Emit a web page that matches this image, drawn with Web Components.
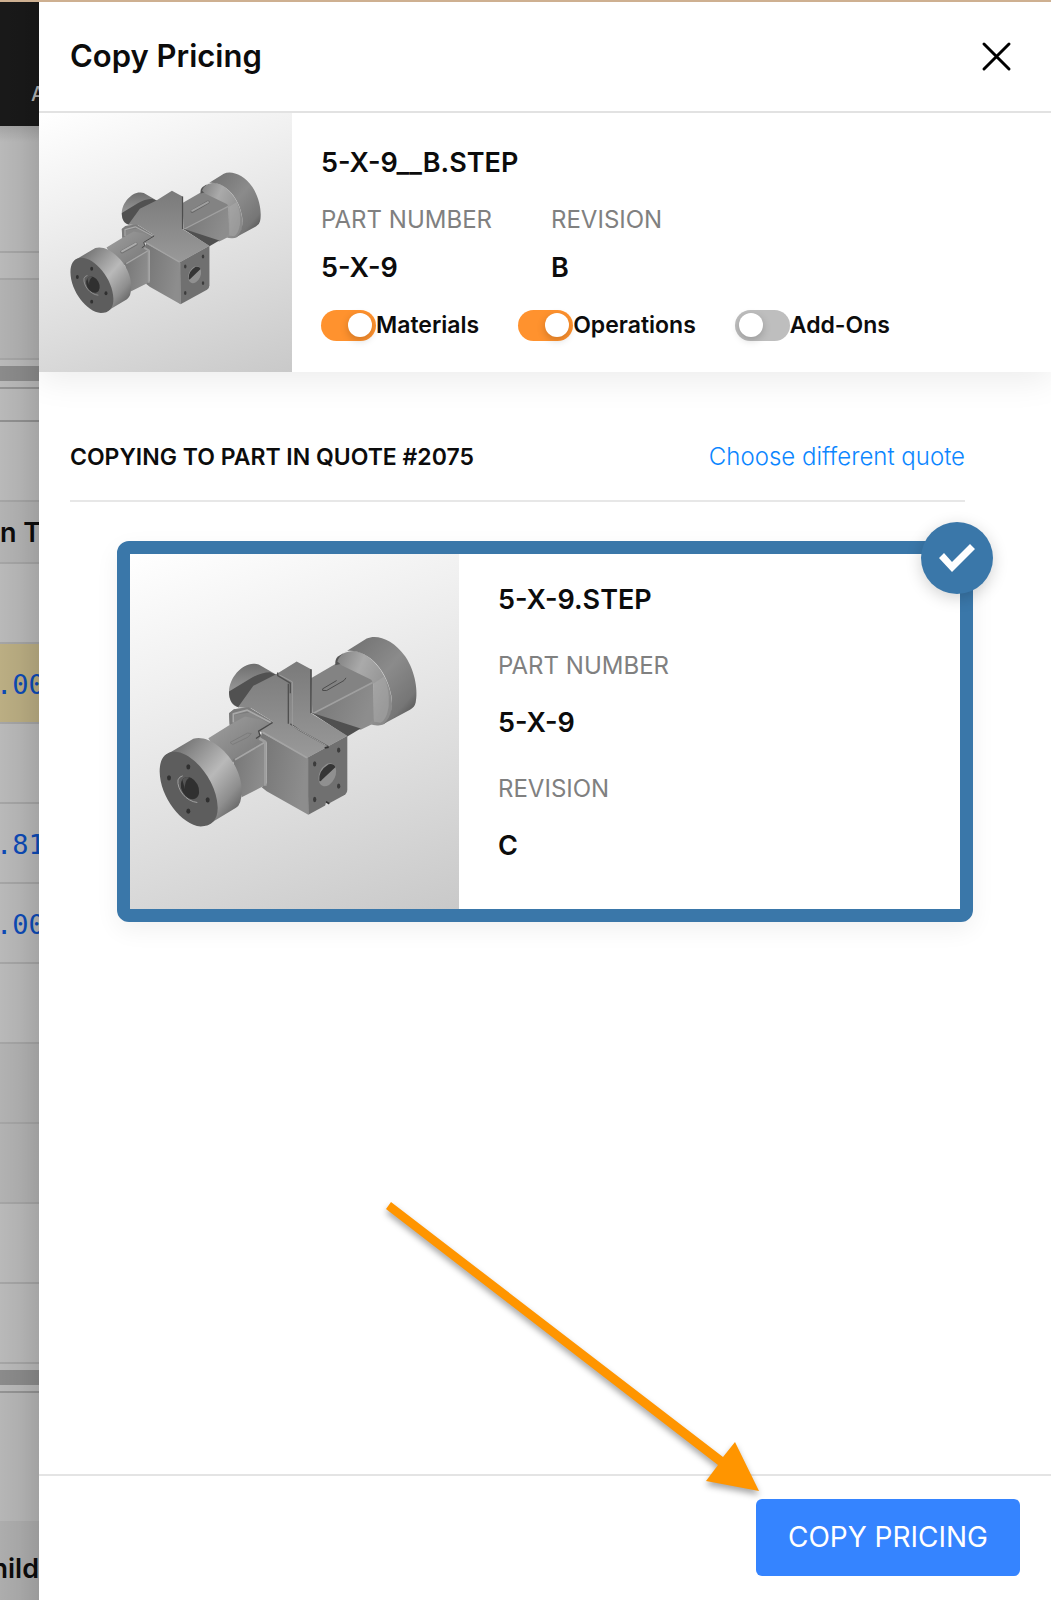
<!DOCTYPE html>
<html lang="en">
<head>
<meta charset="utf-8">
<meta name="viewport" content="width=device-width, initial-scale=1">
<title>Copy Pricing</title>
<style>
  body { margin: 0; font-family: Inter, "Liberation Sans", sans-serif; color: #0c0c0c; background: #fff; }
</style>
</head>
<body>
<app-shell>
  <quote-backdrop slot="behind"></quote-backdrop>
  <copy-drawer>
    <drawer-header slot="header">Copy Pricing</drawer-header>
    <source-part slot="source" name="5-X-9__B.STEP" number="5-X-9" revision="B">
      <toggle-switch checked>Materials</toggle-switch>
      <toggle-switch checked>Operations</toggle-switch>
      <toggle-switch>Add-Ons</toggle-switch>
    </source-part>
    <section-bar>
      COPYING TO PART IN QUOTE #2075
      <span slot="action">Choose different quote</span>
    </section-bar>
    <target-card name="5-X-9.STEP" number="5-X-9" revision="C"></target-card>
    <action-button slot="footer">COPY PRICING</action-button>
    <pointer-arrow slot="overlay"></pointer-arrow>
  </copy-drawer>
</app-shell>

<script>
const define = (name, html, setup) => {
  const template = document.createElement('template');
  template.innerHTML = html;
  customElements.define(name, class extends HTMLElement {
    constructor() {
      super();
      this.attachShadow({ mode: 'open' }).append(template.content.cloneNode(true));
    }
    connectedCallback() {
      if (setup) setup(this, this.shadowRoot);
    }
  });
};

const fillText = (host, root) => {
  root.querySelectorAll('[data-text]').forEach(el => {
    el.textContent = host.getAttribute(el.dataset.text);
  });
};

define('app-shell', `
  <style>
    :host { display: flex; min-height: 100vh; box-sizing: border-box; border-top: 2px solid #ceb091; }
    slot[name=behind] { display: block; flex: 0 0 39px; width: 39px; }
    main { display: flex; flex: 1; min-width: 0; }
  </style>
  <slot name="behind"></slot>
  <main><slot></slot></main>
`);

define('quote-backdrop', `
  <style>
    :host { display: flex; flex-direction: column; height: 100%; overflow: hidden; background: #b9b9b9; position: relative; }
    :host::after { content: ""; position: absolute; inset: 0; background: linear-gradient(90deg, transparent, rgba(0,0,0,.04) 50%, rgba(0,0,0,.11)); }
    div { box-sizing: border-box; display: flex; align-items: center; flex: none; white-space: nowrap; font-size: 27px; line-height: 32px; font-weight: 600; }
    .nav { height: 124px; background: #191919; color: #b5b5b5; font-size: 20px; font-weight: 500; align-items: flex-end; justify-content: flex-end; padding-bottom: 16px; }
    .nav span { width: 8px; }
    .row { height: 80px; border-bottom: 2px solid #a5a5a5; }
    .first { height: 127px; background: linear-gradient(#a4a4a4, #b9b9b9 16px); }
    .thin { height: 27px; }
    .mid { height: 33px; border-color: #909090; }
    .head { height: 62px; background: #b3b3b3; padding-top: 2px; }
    .gap { height: 6px; }
    .bar { height: 15px; background: #8b8b8b; }
    .rule { height: 8px; border-bottom: 2px solid #939393; }
    .shade { background: #b2b2b2; }
    .gold { background: #bbae83; }
    .num { color: #0c4ab6; font-family: "DejaVu Sans Mono", monospace; font-weight: 400; text-indent: -4px; padding-top: 3px; }
    .tail { height: 128px; background: #b6b6b6; }
    .foot { flex: 1; background: #adadad; justify-content: flex-end; padding-top: 16px; }
  </style>
  <div class="nav"><span>A</span></div>
  <div class="row first"></div>
  <div class="row thin"></div>
  <div class="row shade"></div>
  <div class="gap"></div>
  <div class="bar"></div>
  <div class="rule"></div>
  <div class="row mid"></div>
  <div class="row"></div>
  <div class="row head">n T</div>
  <div class="row"></div>
  <div class="row gold num">.00</div>
  <div class="row"></div>
  <div class="row num">.81</div>
  <div class="row num">.00</div>
  <div class="row"></div>
  <div class="row shade"></div>
  <div class="row shade"></div>
  <div class="row"></div>
  <div class="row"></div>
  <div class="gap"></div>
  <div class="bar"></div>
  <div class="rule"></div>
  <div class="tail"></div>
  <div class="foot">hild</div>
`);

define('copy-drawer', `
  <style>
    :host { display: flex; flex-direction: column; flex: 1; min-width: 0; background: #fff; position: relative; }
    .body { flex: 1; padding: 64px 86px 64px 31px; }
    footer { display: flex; justify-content: flex-end; padding: 23px 31px 24px; border-top: 2px solid #e4e4e4; }
  </style>
  <slot name="header"></slot>
  <slot name="source"></slot>
  <div class="body"><slot></slot></div>
  <footer><slot name="footer"></slot></footer>
  <slot name="overlay"></slot>
`);

define('drawer-header', `
  <style>
    :host { display: block; border-bottom: 2px solid #e2e2e2; }
    header { display: flex; align-items: center; justify-content: space-between; height: 109px; padding: 0 31px; box-sizing: border-box; padding-bottom: 1px; }
    h1 { margin: 0; font-size: 31px; line-height: 40px; font-weight: 600; color: #0c0c0c; }
    button { display: flex; border: 0; padding: 0; background: none; cursor: pointer; }
    svg { display: block; width: 48px; height: 48px; }
  </style>
  <header>
    <h1><slot></slot></h1>
    <button type="button" aria-label="Close">
      <svg viewBox="0 0 48 48" fill="none" stroke="#000" stroke-width="3" stroke-linecap="round"><path d="M12 12 37 37M37 12 12 37"/></svg>
    </button>
  </header>
`);

define('part-preview', `
  <style>
    :host { display: block; background: linear-gradient(160deg, #fff, #f0f0f0 30%, #ddd 65%, #c9c9c9); }
    svg { display: block; width: 100%; height: 100%; }
    :host(:not([split])) .split { display: none; }
    :host([split]) .solid { display: none; }
  </style>
  <svg viewBox="60 104 987 1062" aria-hidden="true">
    <defs>
      <linearGradient id="cyl" x1="0" y1="0" x2="1" y2="1"><stop offset="0" stop-color="#6c6c6c"/><stop offset=".5" stop-color="#8b8b8b"/><stop offset=".8" stop-color="#767676"/><stop offset="1" stop-color="#3e3e3e"/></linearGradient>
      <linearGradient id="ring" x1="0" y1="0" x2="1" y2="1"><stop offset="0" stop-color="#5c5c5c"/><stop offset=".25" stop-color="#8a8a8a"/><stop offset=".52" stop-color="#b9b9b9"/><stop offset=".75" stop-color="#8e8e8e"/><stop offset="1" stop-color="#444"/></linearGradient>
      <linearGradient id="fillet" x1="0" y1="0" x2="1" y2=".6"><stop offset="0" stop-color="#808080"/><stop offset=".4" stop-color="#aaa"/><stop offset="1" stop-color="#8a8a8a"/></linearGradient>
      <linearGradient id="top" x1="0" y1="0" x2="0" y2="1"><stop offset="0" stop-color="#7a7a7a"/><stop offset="1" stop-color="#999"/></linearGradient>
      <linearGradient id="front" x1="0" y1="0" x2="1" y2=".3"><stop offset="0" stop-color="#757575"/><stop offset="1" stop-color="#8d8d8d"/></linearGradient>
      <linearGradient id="arm" x1="0" y1="0" x2="1" y2="1"><stop offset="0" stop-color="#a0a0a0"/><stop offset="1" stop-color="#727272"/></linearGradient>
      <linearGradient id="stub" x1="0" y1="0" x2="0" y2="1"><stop offset="0" stop-color="#6e6e6e"/><stop offset="1" stop-color="#b0b0b0"/></linearGradient>
    </defs>
    <path fill="url(#stub)" d="M430 432C395 432 358 475 357 515C357 542 366 558 385 562L440 540L502 466L446 434Q438 431 430 432Z"/>
    <path fill="#515151" d="M357 515L420 477Q450 458 480 457L502 466L430 502L400 558L385 562C366 556 357 540 357 515Z"/>
    <path fill="#838383" d="M603 475L680 430L735 420L800 470L790 490L607 582Z"/>
    <path fill="url(#front)" d="M607 582L790 488L792 610L752 630Z"/>
    <path fill="none" stroke="#a0a0a0" stroke-width="5" d="M609 581L788 488"/>
    <path fill="#505050" d="M603 578L752 626L712 650Z"/>
    <path fill="#555" d="M676 436Q674 418 684 410L700 400V430Z"/>
    <path fill="url(#fillet)" d="M682 425C690 402 710 392 738 394C795 405 845 485 846 552C846 592 832 617 805 617Q790 618 778 611L790 600V492L784 480L696 437Z"/>
    <path fill="#b1b1b1" opacity=".4" d="M792 490L822 470Q840 510 836 560Q830 600 812 609L792 606Z"/>
    <path fill="url(#cyl)" d="M684 410L770 356C800 342 850 358 886 410C918 458 924 518 917 548Q914 562 900 570L812 617C840 604 850 568 844 528C832 455 778 388 712 393Z"/>
    <path fill="#888" d="M357 580L372 568L416 562L488 606L446 636L400 640L359 615Z"/>
    <path fill="url(#top)" d="M497 464L560 425L603 448V580L712 648L592 714L448 634L488 605L425 566L384 562L430 498Z"/>
    <path fill="none" stroke="#4d4d4d" stroke-width="5" d="M603 448V580"/>
    <path fill="url(#arm)" d="M295 655L360 615L405 590L484 606L446 636L468 665L375 722L350 740Z"/>
    <path fill="url(#front)" d="M368 718L468 665V795L395 832Z"/>
    <path fill="none" stroke="#a6a6a6" stroke-width="5" d="M375 720L463 668"/>
    <path fill="#7c7c7c" d="M357 580L372 568L416 562L488 606L480 613L420 578L375 585L372 608L359 615Z"/>
    <path fill="none" stroke="#a9a9a9" stroke-width="5" stroke-linejoin="round" d="M370 608V582L412 571L482 608"/>
    <path fill="none" stroke="#484848" stroke-width="4" d="M488 608L446 634L450 648L438 656"/>
    <path fill="url(#front)" d="M455 638L592 714L595 885L470 814L455 802L470 790V668L452 656Z"/>
    <path fill="none" stroke="#9e9e9e" stroke-width="8" stroke-linejoin="round" d="M448 656L466 666V798"/>
    <path fill="none" stroke="#a4a4a4" stroke-width="5" d="M458 637L591 714"/>
    <path fill="#707070" d="M592 714L712 648V808Q712 820 702 826L595 885Z"/>
    <path fill="none" stroke="#8c8c8c" stroke-width="4" d="M593 716V882"/>
    <ellipse cx="652" cy="765" rx="24" ry="36" transform="rotate(24 652 765)" fill="#909090"/>
    <path fill="#353535" d="M628 782Q625 752 656 733Q672 730 676 742L636 780Q630 788 628 782Z"/>
    <g fill="#3c3c3c"><ellipse cx="614" cy="732" rx="5" ry="8"/><ellipse cx="686" cy="691" rx="5" ry="8"/><ellipse cx="614" cy="839" rx="5" ry="8"/><ellipse cx="686" cy="799" rx="5" ry="8"/></g>
    <path fill="url(#ring)" d="M166 706L250 657C302 640 384 715 394 795Q399 850 378 864L290 917L240 780Z"/>
    <path fill="#5d5d5d" d="M192 696C245 694 321 780 323 862C324 900 305 920 272 920C215 915 150 832 149 755C149 720 162 698 192 696Z"/>
    <path fill="none" stroke="#a0a0a0" stroke-width="3" d="M262 848C228 845 200 808 204 780Q208 770 218 768"/>
    <ellipse cx="240" cy="805" rx="25" ry="35" transform="rotate(-28 240 805)" fill="#303030"/>
    <path fill="#555" d="M217 780Q225 768 238 773Q222 785 225 808Z"/>
    <g fill="#303030"><ellipse cx="235" cy="741" rx="6" ry="8"/><ellipse cx="177" cy="774" rx="6" ry="8"/><ellipse cx="293" cy="840" rx="6" ry="8"/><ellipse cx="235" cy="874" rx="6" ry="8"/></g>
    <g class="split" fill="none">
      <path stroke="#505050" stroke-width="4" d="M503 458V467L541 490V520M535 492V612M541 612L570 632L655 680"/>
      <path stroke="#9c9c9c" stroke-width="3" d="M508 465L547 486V618L650 678"/>
      <path stroke="#4c4c4c" stroke-width="3" d="M708 474L702 482L650 512H638V507L680 482"/>
      <path stroke="#7c7c7c" stroke-width="3" d="M424 641L414 652L368 674L360 668L412 640Z"/>
      <path fill="#ddd" d="M645 862L648 846L660 852Z"/>
      <path stroke="#333" stroke-width="5" d="M644 684L656 682M648 846L658 852"/>
    </g>
    <g class="solid" fill="none" stroke-linecap="round">
      <path stroke="#666" stroke-width="13" d="M642 508L706 471"/>
      <path stroke="#a0a0a0" stroke-width="8" d="M642 506L706 471"/>
      <path stroke="#727272" stroke-width="14" d="M358 672L414 641"/>
      <path stroke="#acacac" stroke-width="8" d="M358 670L414 639"/>
    </g>
  </svg>
`, (host, root) => {
  if (!host.hasAttribute('split')) root.querySelector('svg').setAttribute('viewBox', '22 110 1024 1049');
});

define('toggle-switch', `
  <style>
    :host { display: block; }
    label { display: flex; align-items: center; font-size: 23px; line-height: 32px; font-weight: 600; cursor: pointer; white-space: nowrap; }
    input { appearance: none; margin: 0; display: flex; align-items: center; box-sizing: border-box; width: 55px; height: 31px; padding: 0 4px; border-radius: 16px; background: #bebebe; cursor: pointer; }
    input::before { content: ""; width: 24px; height: 24px; border-radius: 50%; background: #fff; box-shadow: 0 3px 8px rgba(0,0,0,.2); }
    input:checked { background: #ff922e; justify-content: flex-end; }
  </style>
  <label><input type="checkbox"><slot></slot></label>
`, (host, root) => {
  root.querySelector('input').checked = host.hasAttribute('checked');
});

define('source-part', `
  <style>
    :host { display: flex; box-shadow: 0 8px 32px rgba(0,0,0,.08); clip-path: inset(0 0 -48px 0); }
    part-preview { flex: 0 0 253px; height: 259px; }
    .info { flex: 1; padding: 32px 29px 0; min-width: 0; }
    h2 { margin: 0 0 23px; font-size: 27px; line-height: 36px; font-weight: 600; }
    dl { display: flex; gap: 59px; margin: 0 0 23px; }
    dt { font-size: 24px; line-height: 32px; color: #808080; }
    dd { margin: 14px 0 0; font-size: 27px; line-height: 36px; font-weight: 600; }
    .toggles { display: flex; gap: 39px; }
  </style>
  <part-preview></part-preview>
  <div class="info">
    <h2 data-text="name"></h2>
    <dl>
      <div><dt>PART NUMBER</dt><dd data-text="number"></dd></div>
      <div><dt>REVISION</dt><dd data-text="revision"></dd></div>
    </dl>
    <div class="toggles"><slot></slot></div>
  </div>
`, fillText);

define('section-bar', `
  <style>
    :host { display: flex; align-items: flex-start; justify-content: space-between; gap: 24px; height: 66px; padding-top: 5px; box-sizing: border-box; border-bottom: 2px solid #e7e7e7; }
    h2 { margin: 0; font-size: 23px; line-height: 32px; font-weight: 600; }
    a { font-size: 24px; line-height: 32px; color: #0c86ff; font-weight: 300; text-decoration: none; white-space: nowrap; }
  </style>
  <h2><slot></slot></h2>
  <a href="#quotes"><slot name="action"></slot></a>
`);

define('target-card', `
  <style>
    :host { display: block; margin: 39px -8px 0 47px; position: relative; }
    article { display: flex; border: 13px solid #3a77a9; border-radius: 12px; box-shadow: 0 8px 24px rgba(0,0,0,.06); background: #3a77a9; }
    part-preview { flex: 0 0 329px; height: 355px; }
    .info { flex: 1; padding: 28px 39px 0; background: #fff; }
    h3, dl, dt, dd { margin: 0; }
    h3, dd { font-size: 27px; line-height: 36px; font-weight: 600; }
    dl { display: flex; flex-direction: column; }
    dt { margin-top: 32px; font-size: 24px; line-height: 32px; color: #808080; }
    dd { margin-top: 23px; }
    .badge { position: absolute; top: -19px; right: -20px; width: 72px; height: 72px; border-radius: 50%; background: #3a77a9; box-shadow: 0 4px 16px rgba(0,0,0,.18); }
    svg { display: block; width: 72px; height: 72px; }
  </style>
  <article>
    <part-preview split></part-preview>
    <div class="info">
      <h3 data-text="name"></h3>
      <dl>
        <dt>PART NUMBER</dt><dd data-text="number"></dd>
        <dt>REVISION</dt><dd data-text="revision"></dd>
      </dl>
    </div>
  </article>
  <span class="badge"><svg viewBox="0 0 72 72" aria-hidden="true"><path fill="#fff" d="M18 36L23 31L31 40L49 22L54 27L31 50Z"/></svg></span>
`, fillText);

define('action-button', `
  <style>
    :host { display: block; }
    button { display: block; border: 0; border-radius: 6px; padding: 20px 32px; background: #3584ff; color: #fff; font: 400 28px/37px Inter, "Liberation Sans", sans-serif; cursor: pointer; }
  </style>
  <button type="button"><slot></slot></button>
`);

define('pointer-arrow', `
  <style>
    :host { display: block; position: absolute; right: 292px; bottom: 109px; width: 374px; height: 290px; pointer-events: none; }
    svg { display: block; overflow: visible; filter: drop-shadow(0 4px 3px rgba(0,0,0,.35)); }
  </style>
  <svg width="374" height="290" viewBox="385 1201 374 290" aria-hidden="true"><path fill="#ff9500" d="M391 1202L723 1457L735 1442L759 1491L706 1481L718 1465L386 1209Z"/></svg>
`);
</script>
</body>
</html>
